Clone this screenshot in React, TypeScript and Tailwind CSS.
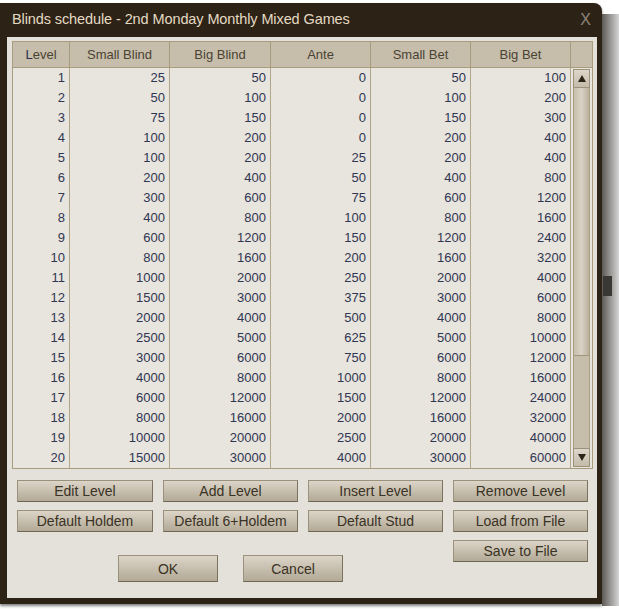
import React from 'react';

const levels = [
  [1, 25, 50, 0, 50, 100],
  [2, 50, 100, 0, 100, 200],
  [3, 75, 150, 0, 150, 300],
  [4, 100, 200, 0, 200, 400],
  [5, 100, 200, 25, 200, 400],
  [6, 200, 400, 50, 400, 800],
  [7, 300, 600, 75, 600, 1200],
  [8, 400, 800, 100, 800, 1600],
  [9, 600, 1200, 150, 1200, 2400],
  [10, 800, 1600, 200, 1600, 3200],
  [11, 1000, 2000, 250, 2000, 4000],
  [12, 1500, 3000, 375, 3000, 6000],
  [13, 2000, 4000, 500, 4000, 8000],
  [14, 2500, 5000, 625, 5000, 10000],
  [15, 3000, 6000, 750, 6000, 12000],
  [16, 4000, 8000, 1000, 8000, 16000],
  [17, 6000, 12000, 1500, 12000, 24000],
  [18, 8000, 16000, 2000, 16000, 32000],
  [19, 10000, 20000, 2500, 20000, 40000],
  [20, 15000, 30000, 4000, 30000, 60000],
];

const columns = [
  { label: 'Level', w: 'w-[57px]' },
  { label: 'Small Blind', w: 'w-[100px]' },
  { label: 'Big Blind', w: 'w-[101px]' },
  { label: 'Ante', w: 'w-[100px]' },
  { label: 'Small Bet', w: 'w-[100px]' },
  { label: 'Big Bet', w: 'w-[100px]' },
];

const Btn = ({ children, className = '' }: { children: React.ReactNode; className?: string }) => (
  <button
    className={`h-[22px] border border-[#9a917c] border-b-[#6f6754] border-r-[#7c735f] bg-gradient-to-b from-[#dcd5c8] to-[#b2a996] text-[14px] leading-none text-[#3a3224] ${className}`}
  >
    {children}
  </button>
);

export default function App() {
  return (
    <div className="w-[619px] h-[611px] bg-white flex font-['Liberation_Sans',Arial,sans-serif] overflow-hidden">
      <div className="w-[602px] flex flex-col">
        <div className="h-[3px]" />
        <div className="h-[601px] bg-[#2d2216] rounded-tr-[8px] flex flex-col shadow-[0_2px_3px_rgba(0,0,0,0.5)]">
          {/* title bar */}
          <div className="h-[34px] flex items-center justify-between pl-[12px] pr-[11px]">
            <span className="text-[14.5px] tracking-[-0.1px] text-[#e4dac4]">Blinds schedule - 2nd Monday Monthly Mixed Games</span>
            <span className="text-[16px] text-[#8c857a] leading-none">X</span>
          </div>
          {/* content */}
          <div className="ml-[7px] mr-[5px] h-[561px] bg-[#e4e0da] pt-[4px] px-[5px] pr-[4px]">
            {/* table */}
            <div className="w-[581px] border border-[#a89b7e] bg-[#e8e4de]">
              <div className="flex h-[26px] bg-[#c7bdab] border-b border-[#a89b7e] text-[13px] text-[#4a4334]">
                {columns.map((c) => (
                  <div key={c.label} className={`${c.w} border-r border-[#a89b7e] flex items-center justify-center`}>
                    {c.label === 'Level' ? (
                      <span>
                        <span className="text-[#27304d]">L</span>evel
                      </span>
                    ) : (
                      c.label
                    )}
                  </div>
                ))}
                <div className="flex-1" />
              </div>
              <div className="flex">
                <div className="flex flex-col">
                  {levels.map((row) => (
                    <div key={row[0]} className="flex h-[20px] text-[13px] text-[#2f3652]">
                      {row.map((v, i) => (
                        <div
                          key={i}
                          className={`${columns[i].w} border-r border-[#b1a58a] flex items-center justify-end pr-[4px]`}
                        >
                          {v}
                        </div>
                      ))}
                    </div>
                  ))}
                </div>
                {/* scrollbar */}
                <div className="flex-1 px-[2px] py-[1px] flex flex-col">
                  <div className="h-[19px] border border-[#9c917a] bg-gradient-to-b from-[#ddd6ca] to-[#c4bba9] flex items-center justify-center">
                    <span className="w-0 h-0 border-x-[4px] border-x-transparent border-b-[7px] border-b-[#2b2418]" />
                  </div>
                  <div className="flex-1 bg-[#c7bdab] border-x border-[#a99d82] flex flex-col">
                    <div className="h-[268px] border-b border-[#a1957a] bg-gradient-to-r from-[#c9bfad] via-[#d9d2c6] to-[#b9af9b]" />
                  </div>
                  <div className="h-[19px] border border-[#9c917a] bg-gradient-to-b from-[#ddd6ca] to-[#c4bba9] flex items-center justify-center">
                    <span className="w-0 h-0 border-x-[4px] border-x-transparent border-t-[7px] border-t-[#2b2418]" />
                  </div>
                </div>
              </div>
            </div>
            {/* buttons */}
            <div className="mt-[11px] pl-[5px] grid grid-cols-[136px_135px_135px_135px] gap-x-[10px] gap-y-[8px]">
              <Btn>Edit Level</Btn>
              <Btn>Add Level</Btn>
              <Btn>Insert Level</Btn>
              <Btn>Remove Level</Btn>
              <Btn>Default Holdem</Btn>
              <Btn>Default 6+Holdem</Btn>
              <Btn>Default Stud</Btn>
              <Btn>Load from File</Btn>
            </div>
            <div className="flex pl-[5px] mt-[8px]">
              <div className="w-[436px] flex pl-[101px] gap-[25px] pt-[15px]">
                <Btn className="w-[100px] !h-[27px]">OK</Btn>
                <Btn className="w-[100px] !h-[27px]">Cancel</Btn>
              </div>
              <Btn className="w-[135px]">Save to File</Btn>
            </div>
          </div>
        </div>
      </div>
      <div className="flex-1 flex flex-col">
        <div className="h-[14px]" />
        <div className="h-[592px] bg-gradient-to-r from-[#5e5a56] via-[#9a9896] to-[#d6d6d6] flex flex-col">
          <div className="mt-[262px] ml-[1px] w-[9px] h-[20px] bg-[#3a3834]" />
        </div>
      </div>
    </div>
  );
}
